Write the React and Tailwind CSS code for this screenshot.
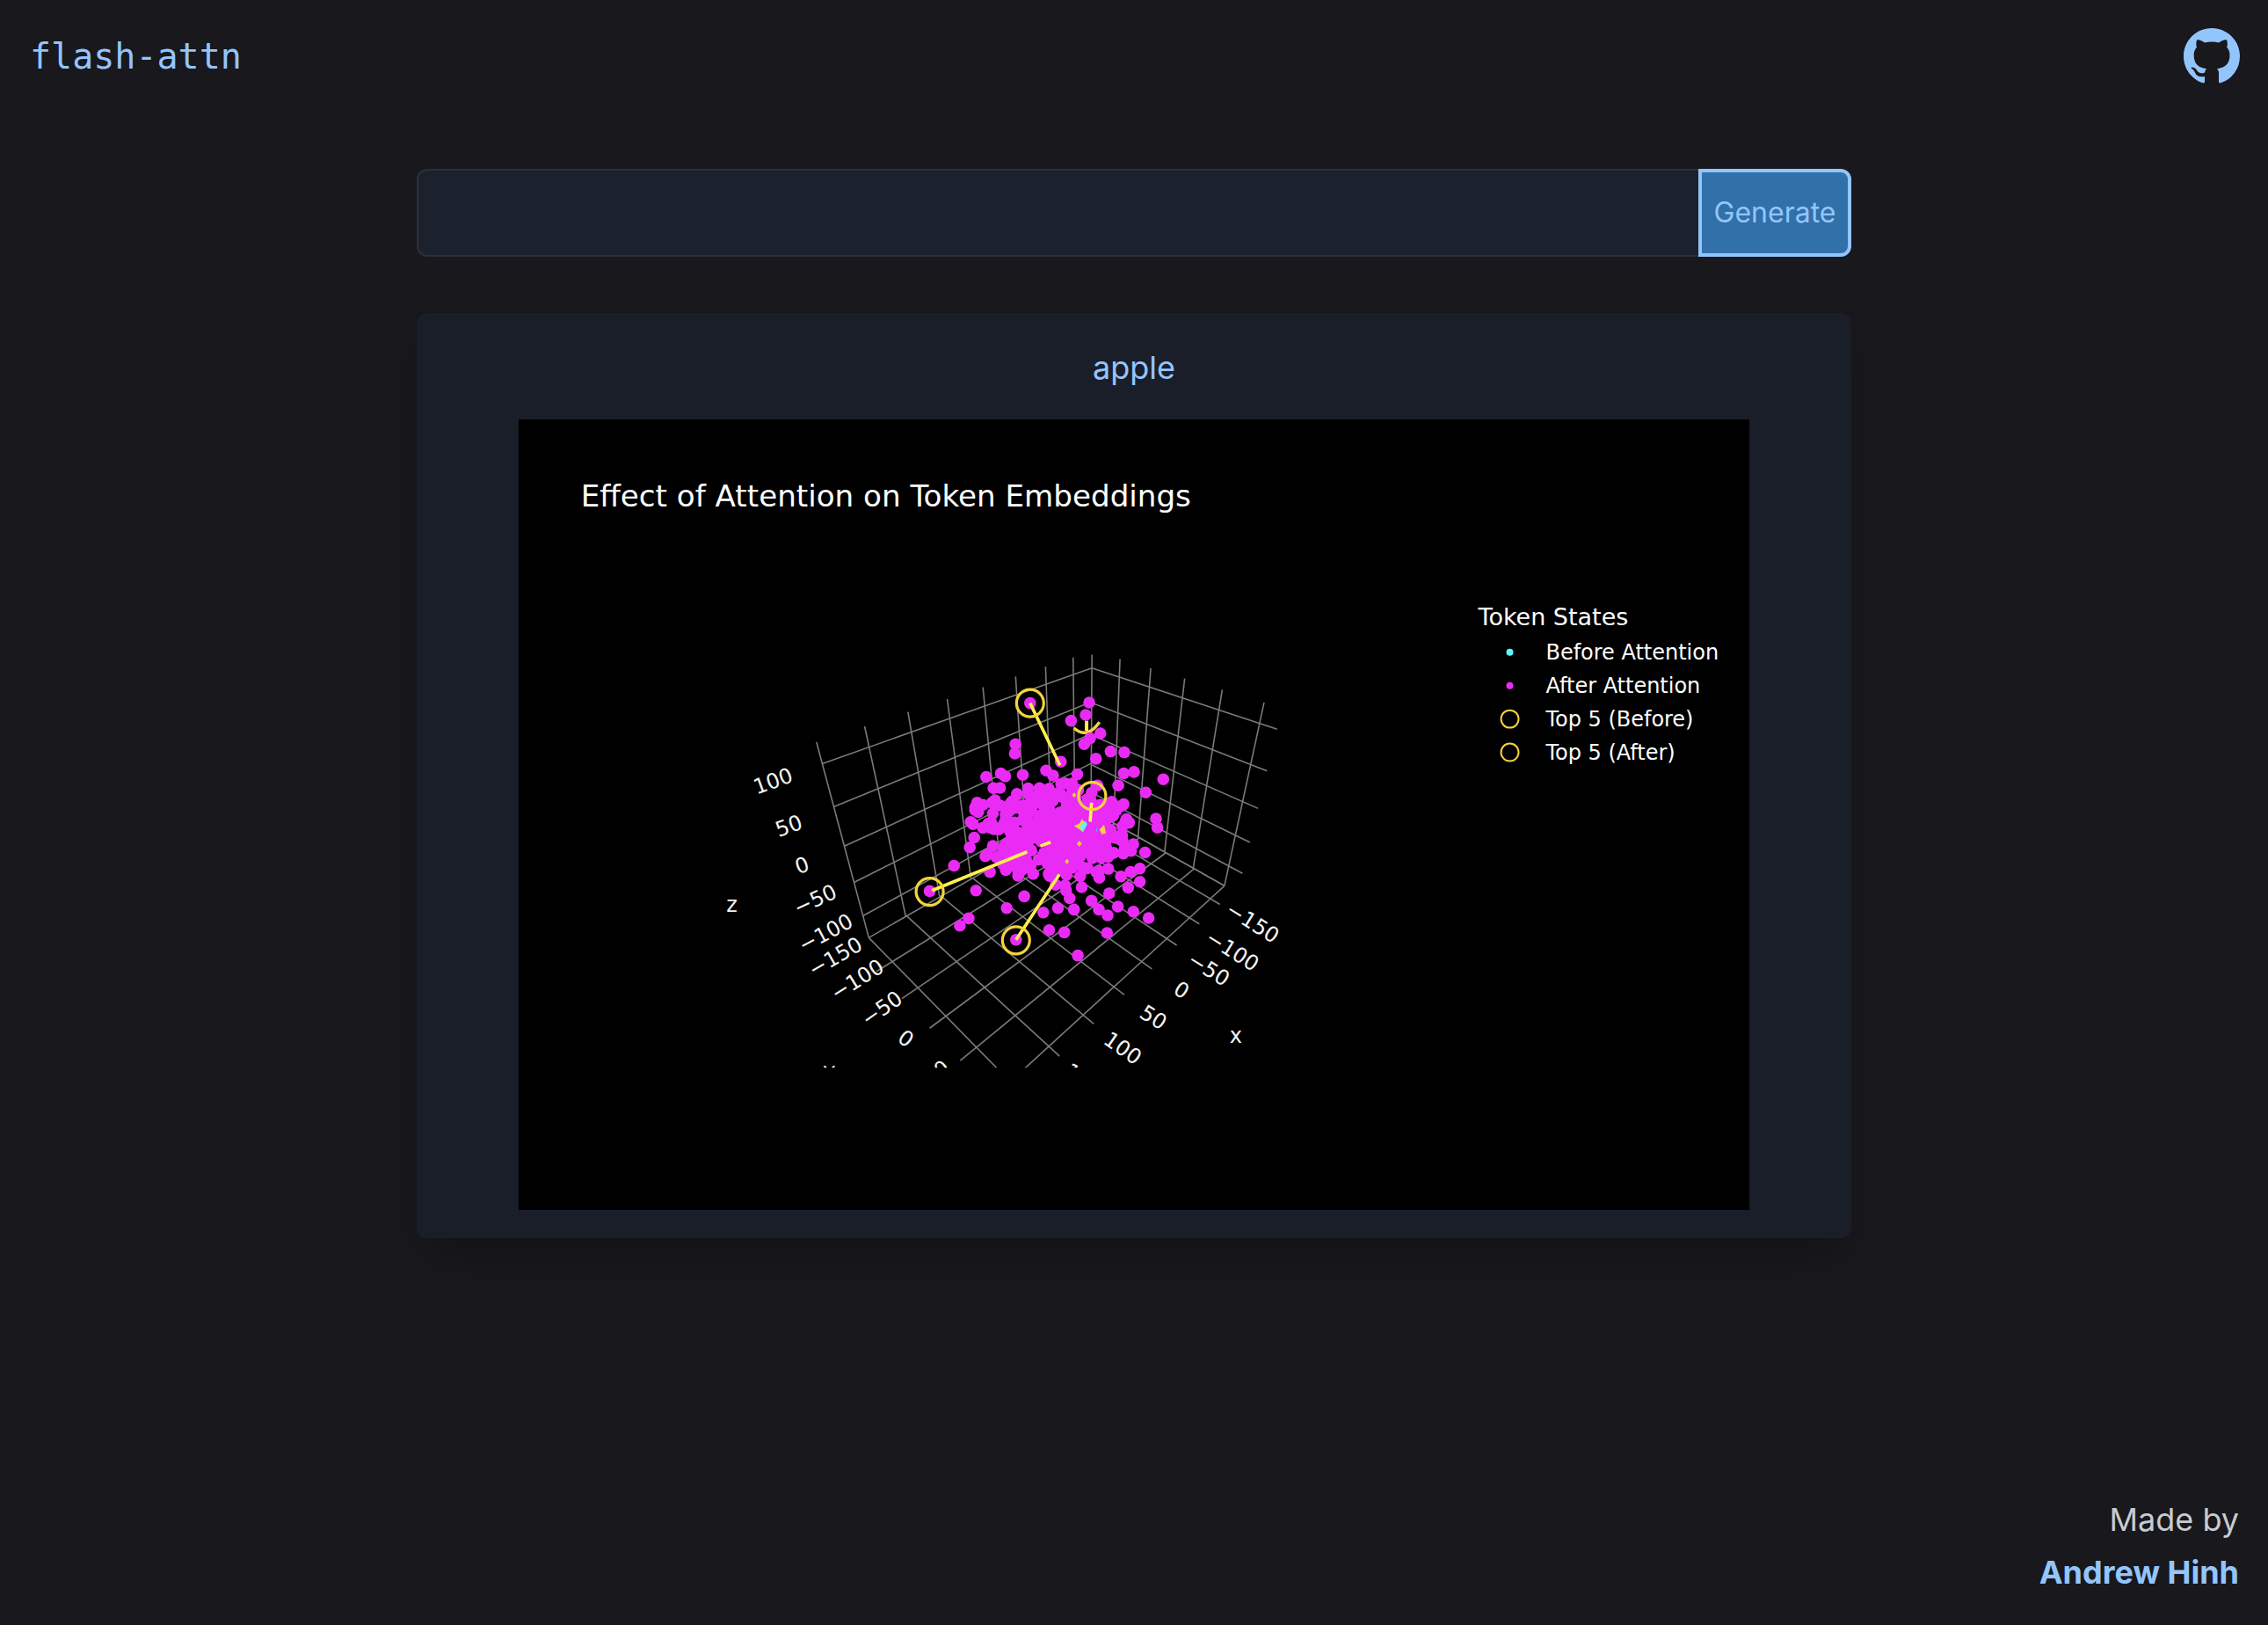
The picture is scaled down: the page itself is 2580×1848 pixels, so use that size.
import React from 'react';

const GITHUB =
  'M8 0C3.58 0 0 3.58 0 8c0 3.54 2.29 6.53 5.47 7.59.4.07.55-.17.55-.38 0-.19-.01-.82-.01-1.49-2.01.37-2.53-.49-2.69-.94-.09-.23-.48-.94-.82-1.13-.28-.15-.68-.52-.01-.53.63-.01 1.08.58 1.23.82.72 1.21 1.87.87 2.33.66.07-.52.28-.87.51-1.07-1.78-.2-3.64-.89-3.64-3.95 0-.87.31-1.59.82-2.15-.08-.2-.36-1.02.08-2.12 0 0 .67-.21 2.2.82.64-.18 1.32-.27 2-.27.68 0 1.36.09 2 .27 1.53-1.04 2.2-.82 2.2-.82.44 1.1.16 1.92.08 2.12.51.56.82 1.27.82 2.15 0 3.07-1.87 3.75-3.65 3.95.29.25.54.73.54 1.48 0 1.07-.01 1.93-.01 2.2 0 .21.15.46.55.38A8.013 8.013 0 0016 8c0-4.42-3.58-8-8-8z';

// maps the unit square onto a quad, so grid lines keep their perspective
function quad([x0, y0], [x1, y1], [x2, y2], [x3, y3]) {
  const dx1 = x1 - x2, dx2 = x3 - x2, dx3 = x0 - x1 + x2 - x3;
  const dy1 = y1 - y2, dy2 = y3 - y2, dy3 = y0 - y1 + y2 - y3;
  const d = dx1 * dy2 - dx2 * dy1;
  const g = (dx3 * dy2 - dx2 * dy3) / d;
  const h = (dx1 * dy3 - dx3 * dy1) / d;
  const a = x1 - x0 + g * x1, b = x3 - x0 + h * x3;
  const e = y1 - y0 + g * y1, f = y3 - y0 + h * y3;
  return (u, v) => {
    const w = g * u + h * v + 1;
    return [(a * u + b * v + x0) / w, (e * u + f * v + y0) / w];
  };
}

const P1 = [935, 869], P2 = [988, 1067], P3 = [1242, 760], P4 = [1241, 922];
const R = [1393, 1008], TR = [1433, 823], F = [1149, 1231];

const left = quad(P2, P4, P3, P1);
const right = quad(P4, R, TR, P3);
const floor = quad(P2, P4, R, F);

const gridLines = [];
const seg = (fn, u0, v0, u1, v1) => gridLines.push([fn(u0, v0), fn(u1, v1)]);
for (let i = 0; i < 8; i++) {
  const u = i / 7.73;
  seg(left, u, 0, u, 1.1);
  seg(floor, u, 0, u, 1.06);
}
seg(left, 1, 0, 1, 1.08);
seg(floor, 1, 0, 1, 1);
for (let j = 0; j < 5; j++) {
  const v = 1 - j / 4.7;
  seg(left, 0, v, 1, v);
  seg(right, 0, v, 1.08, v);
}
seg(left, 0, 0, 1, 0);
seg(right, 0, 0, 1, 0);
for (let i = 1; i < 6; i++) {
  seg(right, i / 5, 0, i / 5, 1.1);
  seg(floor, -0.05, i / 5, 1, i / 5);
}

// zoomed crop coordinates -> page
const zx = (x) => 1040 + x / 3;
const zy = (y) => 740 + y / 3;

const outliers = [
  [597, 178], [585, 220], [535, 240], [635, 283], [345, 320], [343, 352], [500, 380], [717, 348], [670, 345],
  [850, 440], [245, 432], [295, 420], [370, 425], [207, 545], [200, 593], [135, 735], [210, 820], [315, 880],
  [375, 840], [185, 915], [155, 940], [460, 955], [512, 963], [558, 1042], [658, 965], [748, 892], [800, 914],
  [660, 905], [490, 880], [545, 885], [825, 575], [830, 605], [790, 485], [750, 415], [715, 420], [770, 745],
  [770, 790], [695, 875], [630, 885], [605, 855], [665, 830], [730, 810], [440, 895], [52, 822], [347, 988],
  [395, 180], [580, 320], [620, 370], [600, 300], [310, 430], [270, 470], [265, 520], [350, 490], [330, 540],
];

// small seeded generator, the cloud must look the same on each load
let seed = 41;
const rnd = () => {
  seed = (seed * 16807) % 2147483647;
  return seed / 2147483647;
};
const gauss = () => (rnd() + rnd() + rnd() + rnd() - 2) / 0.82;

const cloud = [];
while (cloud.length < 420) {
  const x = 490 + gauss() * 185;
  const y = 625 + gauss() * 115 + (490 - x) * 0.02;
  const dx = (x - 490) / 320, dy = (y - 625) / 225;
  if (dx * dx + dy * dy < 1) cloud.push([x, y]);
}
const points = [...cloud, ...outliers].map(([x, y]) => [zx(x), zy(y)]);

const axisLabels = [
  ['100', 879, 889, -20], ['50', 897, 940, -20], ['0', 912, 985, -20], ['−50', 927, 1024, -25], ['−100', 939, 1062, -28],
  ['−150', 950, 1089, -30], ['−100', 975, 1115, -32], ['−50', 1003, 1148, -35], ['0', 1030, 1182, 35], ['50', 1065, 1221, -35],
  ['y', 943, 1219, 0],
  ['−150', 1425, 1050, 32], ['−100', 1402, 1082, 32], ['−50', 1375, 1103, 32], ['0', 1344, 1127, 32], ['50', 1312, 1158, 32],
  ['100', 1277, 1193, 35], ['150', 1232, 1229, 35],
  ['x', 1406, 1179, 0], ['z', 832, 1030, 0],
];

const yellowLines = [
  [395, 180, 497, 392], [60, 820, 385, 688], [430, 668, 465, 655], [347, 988, 495, 765], [605, 520, 600, 585],
];
const rings = [[395, 180], [52, 824], [347, 990], [607, 497]];
const shards = [
  ['#f5d33c', '545,600 565,590 572,575 585,590 575,620 560,608'],
  ['#5ff5f5', '565,600 585,582 590,595 575,622'],
  ['#f5d33c', '632,612 648,595 654,625 640,628'],
  ['#5f9cf5', '620,606 625,606 625,620 620,620'],
  ['#f5d33c', '555,660 563,650 572,660 563,670'],
  ['#f5d33c', '514,720 522,712 528,722 520,730'],
  ['#f5d33c', '538,492 548,486 552,498 544,502'],
];

function Plot() {
  return (
    <svg viewBox="590 477 1400 900" className="block w-full h-full font-['DejaVu_Sans',sans-serif]">
      <defs>
        <clipPath id="scene">
          <rect x="590" y="477" width="1400" height="738" />
        </clipPath>
      </defs>
      <text x="660" y="576" fill="#fff" fontSize="34" textLength="695" lengthAdjust="spacingAndGlyphs">
        Effect of Attention on Token Embeddings
      </text>
      <g clipPath="url(#scene)">
        {gridLines.map(([a, b], i) => (
          <line key={i} x1={a[0]} y1={a[1]} x2={b[0]} y2={b[1]} stroke="#7a7a7a" strokeWidth="1.6" />
        ))}
        {axisLabels.map(([t, x, y, rot], i) => (
          <text key={i} x={x} y={y} fill="#f4f4f4" fontSize="24" textAnchor="middle" dominantBaseline="central"
            transform={`rotate(${rot} ${x} ${y})`}>
            {t}
          </text>
        ))}
        <path d={`M${zx(545)} ${zy(265)} Q${zx(590)} ${zy(305)} ${zx(632)} ${zy(245)}`} fill="none" stroke="#f5d33c" strokeWidth="3.5" />
        <line x1={zx(588)} y1={zy(240)} x2={zx(588)} y2={zy(275)} stroke="#fdf04f" strokeWidth="4" />
        {points.map(([x, y], i) => (
          <circle key={i} cx={x} cy={y} r="6.8" fill="#ea2bf5" />
        ))}
        {shards.map(([c, pts], i) => (
          <polygon key={i} fill={c} points={pts.split(' ').map((p) => {
            const [x, y] = p.split(',').map(Number);
            return `${zx(x)},${zy(y)}`;
          }).join(' ')} />
        ))}
        {yellowLines.map(([a, b, c, d], i) => (
          <line key={i} x1={zx(a)} y1={zy(b)} x2={zx(c)} y2={zy(d)} stroke="#fdf04f" strokeWidth="3.6" />
        ))}
        {rings.map(([x, y], i) => (
          <circle key={i} cx={zx(x)} cy={zy(y)} r="15.5" fill="none" stroke="#f5d33c" strokeWidth="3.2" />
        ))}
      </g>
      <g fill="#fff" fontSize="24">
        <text x="1682" y="711" fontSize="27">Token States</text>
        <circle cx="1718" cy="742" r="4" fill="#5ff5f5" />
        <text x="1759" y="750">Before Attention</text>
        <circle cx="1718" cy="780" r="4" fill="#ea2bf5" />
        <text x="1759" y="788">After Attention</text>
        <circle cx="1718" cy="818" r="10" fill="none" stroke="#f5d33c" strokeWidth="2" />
        <text x="1759" y="826">Top 5 (Before)</text>
        <circle cx="1718" cy="856" r="10" fill="none" stroke="#f5d33c" strokeWidth="2" />
        <text x="1759" y="864">Top 5 (After)</text>
      </g>
    </svg>
  );
}

export default function App() {
  return (
    <div className="h-[1848px] flex flex-col bg-[#18181d] font-['Inter',sans-serif] text-[#93c5fd]">
      <header className="flex items-start justify-between pl-[34px] pr-[32px] pt-[32px] h-[128px]">
        <h1 className="text-[40px] leading-[64px] font-['DejaVu_Sans_Mono',monospace]">flash-attn</h1>
        <svg viewBox="0 0 16 16" className="w-[64px] h-[64px]" fill="currentColor">
          <path d={GITHUB} />
        </svg>
      </header>

      <main className="w-[1632px] mx-auto pt-[64px]">
        <form className="flex h-[100px]">
          <input className="flex-1 min-w-0 bg-[#1c222d] border-2 border-r-0 border-[#2c303b] rounded-l-xl outline-none" type="text" />
          <button type="button" className="w-[174px] bg-[#3170a8] border-[4px] border-[#93c5fd] rounded-r-xl text-[32px]">
            Generate
          </button>
        </form>

        <section className="mt-[64px] p-[32px] bg-[#1a1e29] rounded-xl shadow-2xl">
          <h2 className="text-center text-[36px] leading-[60px] mb-[29px]">apple</h2>
          <div className="mx-auto w-[1400px] h-[899px] bg-black">
            <Plot />
          </div>
        </section>
      </main>

      <footer className="mt-auto pr-[33px] pb-[30px] text-right text-[36px] leading-[60px]">
        <p className="text-[#c8cbd0]">Made by</p>
        <a className="font-bold block">Andrew Hinh</a>
      </footer>
    </div>
  );
}
